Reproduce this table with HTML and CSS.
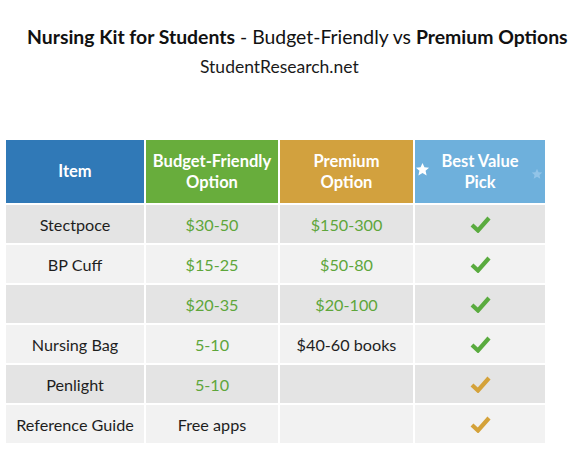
FILE: index.html
```html
<!DOCTYPE html>
<html>
<head>
<meta charset="utf-8">
<link rel="stylesheet" href="styles.css">
</head>
<body>
<header class="titles">
  <h1 class="title"><b>Nursing Kit for Students</b> - Budget-Friendly vs <b>Premium Options</b></h1>
  <p class="site">StudentResearch.net</p>
</header>
<svg width="0" height="0" class="defs">
  <defs>
    <path id="tick" d="M3 10 L9 15.5 L20 3" fill="none" stroke-width="4.2" stroke-linecap="butt" stroke-linejoin="miter"/>
  </defs>
</svg>
<div class="table">
  <div class="th th-item">Item</div>
  <div class="th th-budget">Budget-Friendly<br>Option</div>
  <div class="th th-premium">Premium<br>Option</div>
  <div class="th th-best">
    <svg class="star star-main" viewBox="0 0 24 24"><path d="M12 1.5l3.1 6.9 7.4.7-5.6 5 1.7 7.4L12 17.6l-6.6 3.9 1.7-7.4-5.6-5 7.4-.7z"/></svg>
    Best Value<br>Pick
    <svg class="star star-faint" viewBox="0 0 24 24"><path d="M12 1.5l3.1 6.9 7.4.7-5.6 5 1.7 7.4L12 17.6l-6.6 3.9 1.7-7.4-5.6-5 7.4-.7z"/></svg>
  </div>

  <div class="td dark">Stectpoce</div>
  <div class="td dark green">$30-50</div>
  <div class="td dark green">$150-300</div>
  <div class="td dark"><svg class="check ok" viewBox="0 0 23 18"><use href="#tick"/></svg></div>

  <div class="td light">BP Cuff</div>
  <div class="td light green">$15-25</div>
  <div class="td light green">$50-80</div>
  <div class="td light"><svg class="check ok" viewBox="0 0 23 18"><use href="#tick"/></svg></div>

  <div class="td dark"></div>
  <div class="td dark green">$20-35</div>
  <div class="td dark green">$20-100</div>
  <div class="td dark"><svg class="check ok" viewBox="0 0 23 18"><use href="#tick"/></svg></div>

  <div class="td light">Nursing Bag</div>
  <div class="td light green">5-10</div>
  <div class="td light">$40-60 books</div>
  <div class="td light"><svg class="check ok" viewBox="0 0 23 18"><use href="#tick"/></svg></div>

  <div class="td dark">Penlight</div>
  <div class="td dark green">5-10</div>
  <div class="td dark"></div>
  <div class="td dark"><svg class="check gold" viewBox="0 0 23 18"><use href="#tick"/></svg></div>

  <div class="td light">Reference Guide</div>
  <div class="td light">Free apps</div>
  <div class="td light"></div>
  <div class="td light"><svg class="check gold" viewBox="0 0 23 18"><use href="#tick"/></svg></div>
</div>
</body>
</html>
```
FILE: styles.css
```css
html, body {
  margin: 0;
  padding: 0;
  background: #ffffff;
}
body {
  font-family: Lato, "Open Sans", "Liberation Sans", sans-serif;
  color: #1f1f1f;
  width: 581px;
  height: 465px;
  overflow: hidden;
}
.defs {
  position: absolute;
}
.titles {
  padding-top: 23px;
}
.title {
  margin: 0 0 0 27px;
  font-size: 19.4px;
  font-weight: 400;
  line-height: 27px;
  color: #111;
  white-space: nowrap;
}
.title b {
  font-weight: 700;
}
.site {
  margin: 5px 0 0 200px;
  font-size: 17.5px;
  line-height: 24px;
  color: #1a1a1a;
}
.table {
  margin: 61px 0 0 6px;
  display: grid;
  grid-template-columns: 138px 132px 133px 130px;
  grid-template-rows: 63px repeat(6, 38px);
  column-gap: 2px;
  row-gap: 2px;
  width: 539px;
}
.th {
  display: flex;
  align-items: center;
  justify-content: center;
  text-align: center;
  color: #ffffff;
  font-weight: 700;
  font-size: 16.5px;
  line-height: 21px;
  position: relative;
}
.th-item { background: #3079b7; }
.th-budget { background: #68ad3c; }
.th-premium { background: #d2a13e; }
.th-best { background: #6eb0dc; }
.star {
  position: absolute;
}
.star path { fill: currentColor; }
.star-main {
  width: 15px;
  height: 15px;
  left: 0;
  top: 22px;
  color: #ffffff;
}
.star-faint {
  width: 12px;
  height: 12px;
  left: 116px;
  top: 28px;
  color: #92c4e8;
}
.td {
  display: flex;
  align-items: center;
  justify-content: center;
  font-size: 16.2px;
  color: #1e1e1e;
}
.dark { background: #e4e4e4; }
.light { background: #f2f2f2; }
.green { color: #5ea63b; }
.check {
  width: 23px;
  height: 18px;
  margin-left: 1px;
}
.check.ok use { stroke: #5aab3f; }
.check.gold use { stroke: #d4a23a; }
```
